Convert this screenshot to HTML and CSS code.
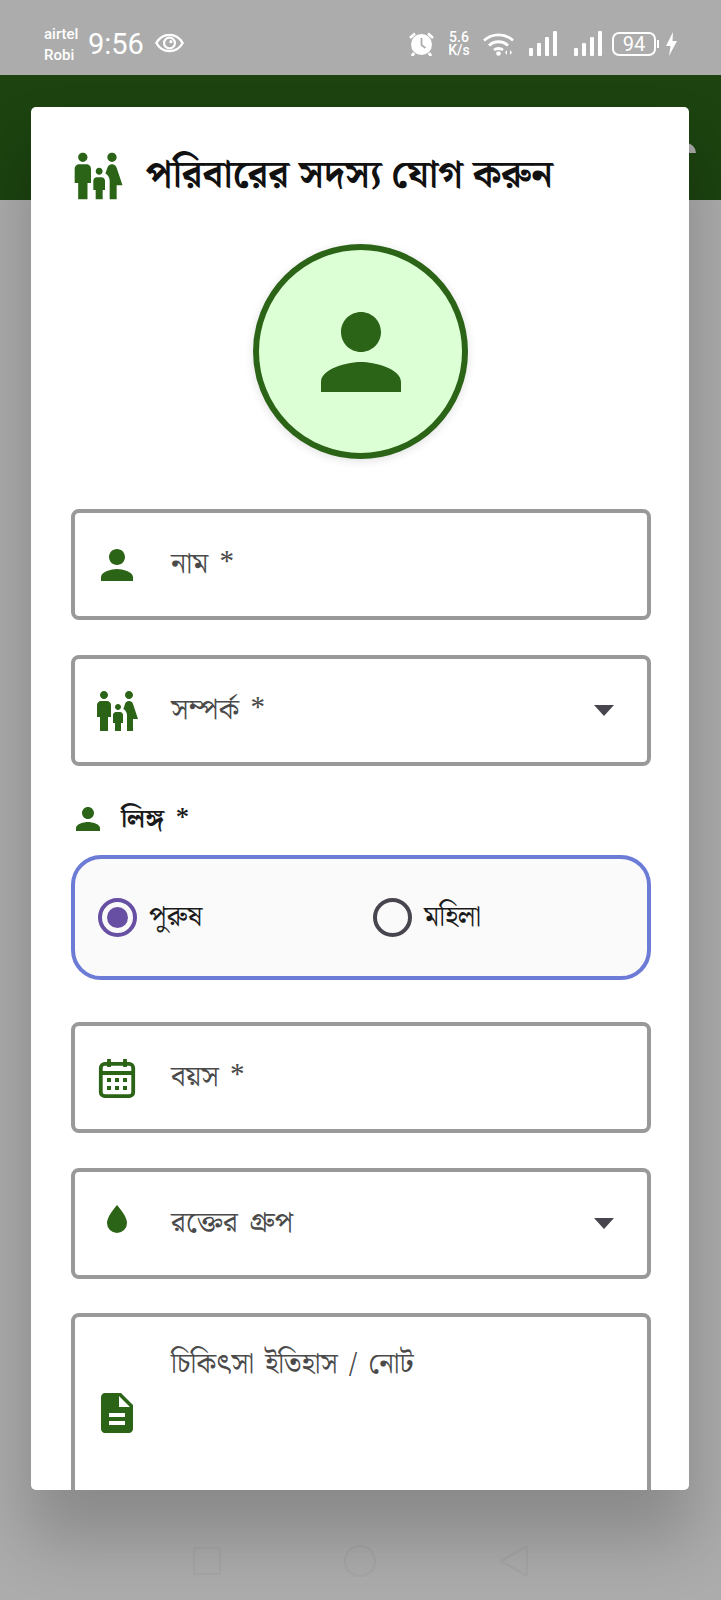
FILE: index.html
```html
<!DOCTYPE html>
<html lang="bn">
<head>
<meta charset="utf-8">
<title>পরিবারের সদস্য যোগ করুন</title>
<link rel="stylesheet" href="styles.css">
</head>
<body>
<svg class="defs" width="0" height="0">
  <symbol id="person" viewBox="0 0 24 24"><path d="M12 12c2.21 0 4-1.79 4-4s-1.79-4-4-4-4 1.79-4 4 1.79 4 4 4zm0 2c-2.67 0-8 1.34-8 4v2h16v-2c0-2.66-5.33-4-8-4z"/></symbol>
  <symbol id="family" viewBox="0 0 24 24"><path d="M16 4c0-1.11.89-2 2-2s2 .89 2 2-.89 2-2 2-2-.89-2-2zm4 18v-6h2.5l-2.54-7.63C19.68 7.55 18.92 7 18.06 7h-.12c-.86 0-1.63.55-1.9 1.37l-.86 2.58c1.08.6 1.82 1.73 1.82 3.05v8h4zm-7.5-10.5c.83 0 1.5-.67 1.5-1.5s-.67-1.5-1.5-1.5S11 9.17 11 10s.67 1.5 1.5 1.5zM5.5 6c1.11 0 2-.89 2-2s-.89-2-2-2-2 .89-2 2 .89 2 2 2zm2 16v-7H9V9c0-1.1-.9-2-2-2H4c-1.1 0-2 .9-2 2v6h1.5v7h4zm6.5 0v-4h1v-4c0-.82-.68-1.5-1.5-1.5h-2c-.82 0-1.5.68-1.5 1.5v4h1v4h3z"/></symbol>
  <symbol id="signal" viewBox="0 0 28 25"><rect x="0" y="17" width="4" height="8" rx="1"/><rect x="8" y="12" width="4" height="13" rx="1"/><rect x="16" y="6" width="4" height="19" rx="1"/><rect x="24" y="0" width="4" height="25" rx="1"/></symbol>
</svg>
<div class="screen">
  <header class="status">
    <div class="carriers"><span>airtel</span><span>Robi</span></div>
    <span class="clock">9:56</span>
    <svg class="eye" viewBox="0 0 32 22"><path d="M16 2C9 2 4 6.500 1.500 11 4 15.500 9 20 16 20s12-4.500 14.500-9C28 6.500 23 2 16 2z" fill="none" stroke="#fff" stroke-width="2.600"/><circle cx="16" cy="11" r="6" fill="none" stroke="#fff" stroke-width="2.400"/><circle cx="17.500" cy="9.500" r="1.800" fill="#fff"/></svg>
    <div class="status-right">
      <svg class="alarm" viewBox="0 0 25 24"><circle cx="12.500" cy="12.500" r="10.500" fill="#fff"/><path d="M1 6 6 1.500M24 6 19 1.500" stroke="#fff" stroke-width="2.600" fill="none"/><path d="M5 21 3 24M20 21l2 3" stroke="#fff" stroke-width="3"/><path d="M12.500 6v7l4 3" stroke="#acacac" stroke-width="1.800" fill="none"/></svg>
      <div class="speed"><span>5.6</span><span>K/s</span></div>
      <svg class="wifi" viewBox="0 0 31 24"><g fill="none" stroke="#fff" stroke-width="2.800"><path d="M1 8.500C9 1 22 1 30 8.500"/><path d="M6 13.500c5.500-5 13.500-5 19 0"/><path d="M11 18c2.500-2 6.500-2 9 0"/></g><circle cx="15.500" cy="21.500" r="2.300" fill="#fff"/><path d="M24 18v5l-2-2.500zM27 23v-5l2 2.500z" fill="#fff"/></svg>
      <svg class="signal"><use href="#signal"/></svg>
      <svg class="signal second"><use href="#signal"/></svg>
      <div class="battery">94</div>
      <span class="nub"></span>
      <svg class="bolt" viewBox="0 0 11 24"><path d="M7 0 0 14h4.500L3 24l8-15H6.500z" fill="#fff"/></svg>
    </div>
  </header>
  <div class="appbar"><span class="appbar-avatar"></span></div>
  <div class="backdrop"></div>
  <nav class="navbar">
    <svg viewBox="0 0 28 28" class="nav-square"><rect x="1" y="1" width="26" height="26" rx="1"/></svg>
    <svg viewBox="0 0 32 32" class="nav-circle"><circle cx="16" cy="16" r="15"/></svg>
    <svg viewBox="0 0 28 32" class="nav-back"><path d="M27 1v30L1 16z"/></svg>
  </nav>

  <section class="dialog">
    <h1 class="title">
      <svg class="icon title-icon"><use href="#family"/></svg>
      <span>পরিবারের সদস্য যোগ করুন</span>
    </h1>
    <div class="avatar"><svg class="icon avatar-icon"><use href="#person"/></svg></div>

    <div class="field">
      <svg class="icon field-icon"><use href="#person"/></svg>
      <span class="placeholder">নাম *</span>
    </div>
    <div class="field">
      <svg class="icon field-icon"><use href="#family"/></svg>
      <span class="placeholder">সম্পর্ক *</span>
      <span class="caret"></span>
    </div>
    <div class="group-label">
      <svg class="icon label-icon"><use href="#person"/></svg>
      <span>লিঙ্গ *</span>
    </div>
    <div class="radios">
      <div class="radio-item">
        <span class="radio selected"></span>
        <span>পুরুষ</span>
      </div>
      <div class="radio-item">
        <span class="radio"></span>
        <span>মহিলা</span>
      </div>
    </div>
    <div class="field">
      <svg class="icon field-icon calendar" viewBox="0 0 24 24"><rect x="3.900" y="4.900" width="16.200" height="16.200" rx="2" class="line"/><path d="M3.900 9.500h16.200M8 2.500v4M16 2.500v4" class="line"/><path d="M7 12h2v2H7zM11 12h2v2h-2zM15 12h2v2h-2zM7 16h2v2H7zM11 16h2v2h-2zM15 16h2v2h-2z"/></svg>
      <span class="placeholder">বয়স *</span>
    </div>
    <div class="field">
      <svg class="icon field-icon" viewBox="0 0 24 24"><path d="M12 2.500C8.500 6.500 7 9.500 7 11.500a5 5 0 0 0 10 0C17 9.500 15.500 6.500 12 2.500z"/></svg>
      <span class="placeholder">রক্তের গ্রুপ</span>
      <span class="caret"></span>
    </div>
    <div class="field notes">
      <svg class="icon field-icon" viewBox="0 0 24 24"><path d="M14 2H6c-1.100 0-1.990.9-1.990 2L4 20c0 1.100.89 2 1.990 2H18c1.100 0 2-.9 2-2V8l-6-6zm2 16H8v-2h8v2zm0-4H8v-2h8v2zm-3-5V3.500L18.500 9H13z"/></svg>
      <span class="placeholder">চিকিৎসা ইতিহাস / নোট</span>
    </div>
  </section>
</div>
</body>
</html>
```
FILE: styles.css
```css
* { box-sizing: border-box; }
html, body { margin: 0; padding: 0; }
.defs { position: absolute; }
.screen {
  position: relative;
  width: 721px;
  height: 1600px;
  overflow: hidden;
  display: flex;
  flex-direction: column;
  background: #acacac;
  font-family: "Noto Serif Bengali", "Lohit Bengali", "Noto Sans", "Liberation Sans", sans-serif;
}
.status {
  height: 75px;
  flex: none;
  background: #acacac;
  display: flex;
  align-items: center;
  padding: 14px 44px 0 44px;
  color: #fff;
  font-family: Roboto, sans-serif;
}
.carriers {
  display: flex;
  flex-direction: column;
  font-size: 15px;
  line-height: 21px;
  font-weight: 500;
  width: 44px;
  margin-top: 1px;
}
.clock { font-size: 29px; line-height: 36px; width: 67px; margin-top: -2px; font-weight: 400; }
.eye { width: 29px; height: 22px; margin-top: -3px; }
.status-right { margin-left: auto; display: flex; align-items: center; margin-top: -2px; }
.alarm { width: 25px; height: 24px; margin-right: 12px; }
.speed { display: flex; flex-direction: column; font-size: 14px; line-height: 13px; font-weight: 500; width: 26px; margin-right: 11px; text-align: center; }
.wifi { width: 31px; height: 24px; margin-right: 15px; }
.signal { width: 28px; height: 25px; fill: #fff; margin-right: 17px; }
.signal.second { margin-right: 10px; }
.battery {
  width: 44px; height: 24px;
  border: 2px solid #fff;
  border-radius: 7px;
  font-size: 20px;
  line-height: 20px;
  text-align: center;
}
.nub { width: 2px; height: 8px; background: #fff; margin: 0 7px 0 1px; }
.bolt { width: 11px; height: 24px; }

.appbar { height: 125px; flex: none; background: #1c4310; position: relative; }
.appbar-avatar { position: absolute; right: 25px; top: 68px; width: 20px; height: 10px; border-radius: 10px 10px 0 0; background: #a8a8a8; }
.backdrop { flex: 1; background: #acacac; }
.navbar {
  position: absolute;
  left: 0; right: 0; bottom: 0;
  height: 110px;
}
.navbar svg { position: absolute; fill: none; stroke: #a6a6a6; stroke-width: 2.500; }
.nav-square { left: 193px; top: 57px; width: 28px; height: 28px; }
.nav-circle { left: 344px; top: 55px; width: 32px; height: 32px; }
.nav-back { left: 500px; top: 55px; width: 28px; height: 32px; }

.dialog {
  position: absolute;
  left: 31px;
  top: 107px;
  width: 658px;
  height: 1383px;
  padding: 0 38px 0 40px;
  background: #fff;
  border-radius: 5px;
  overflow: hidden;
  color: #1c1b1f;
  box-shadow: 0 45px 65px 5px rgba(0,0,0,.2);
}
.icon { fill: #2b6416; display: block; flex: none; }
.line { fill: none; stroke: #2b6416; stroke-width: 1.900; }
.title {
  display: flex;
  align-items: center;
  height: 56px;
  margin: 41px 0 0;
  font-size: 38px;
  font-weight: 700;
  color: #111;
  gap: 20px;
}
.title-icon { width: 56px; height: 56px; margin-left: -1px; }
.avatar {
  width: 215px;
  height: 215px;
  margin: 40px 0 50px 182px;
  border: 6px solid #2b6416;
  border-radius: 50%;
  background: #dcffd6;
  display: flex;
  align-items: center;
  justify-content: center;
  box-shadow: 0 2px 10px rgba(0,0,0,.12);
}
.avatar-icon { width: 120px; height: 120px; }
.field {
  position: relative;
  display: flex;
  align-items: center;
  height: 111px;
  margin-bottom: 35px;
  padding-left: 18px;
  border: 4px solid #999;
  border-radius: 8px;
  background: #fff;
}
.field-icon { width: 48px; height: 48px; }
.placeholder { margin-left: 30px; font-size: 29px; color: #4a4a4a; word-spacing: 4px; }
.caret {
  position: absolute;
  right: 33px;
  top: 46px;
  border-left: 10px solid transparent;
  border-right: 10px solid transparent;
  border-top: 11px solid #49454f;
}
.notes { height: 200px; margin: -1px 0 0; }
.notes .placeholder { position: absolute; left: 96px; top: 25px; margin: 0; font-size: 28px; }
.group-label {
  display: flex;
  align-items: center;
  height: 36px;
  margin: 0 0 0 -1px;
  font-size: 26px;
  font-weight: 700;
  color: #1a1a1a;
  gap: 15px;
  word-spacing: 5px;
}
.label-icon { width: 36px; height: 36px; }
.radios {
  display: grid;
  grid-template-columns: 275px 1fr;
  align-items: center;
  height: 125px;
  margin: 18px 0 42px;
  padding-left: 23px;
  border: 4px solid #6b7bd6;
  border-radius: 30px;
  background: #fafafa;
}
.radio-item { display: flex; align-items: center; gap: 12px; font-size: 28px; color: #1a1a1a; }
.radio {
  display: flex;
  align-items: center;
  justify-content: center;
  width: 39px;
  height: 39px;
  border: 4px solid #49454f;
  border-radius: 50%;
}
.radio.selected { border-color: #6750a4; }
.radio.selected::after { content: ""; width: 21px; height: 21px; border-radius: 50%; background: #6750a4; }
```
